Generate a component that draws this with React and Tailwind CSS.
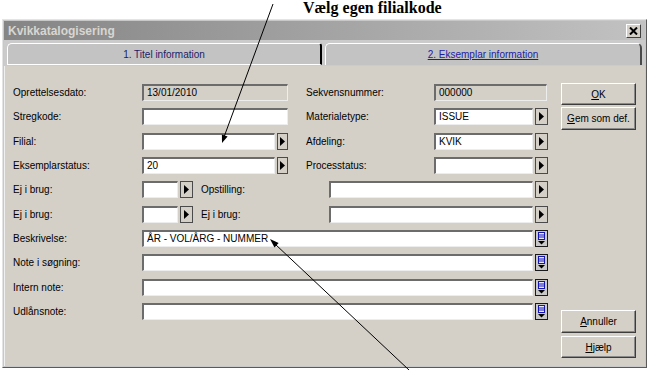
import React from 'react';

const Field = ({ w, value, ro }) => (
    <div
        className={`h-[17px] ${w} shrink-0 border-t-2 border-l-2 border-t-[#6c6c6c] border-l-[#6c6c6c] border-b border-r border-b-[#ededed] border-r-[#ededed] ${ro ? 'bg-[#d4d0c8]' : 'bg-white'} flex items-center pl-[3px] text-[10px] text-black leading-none whitespace-nowrap`}
    >
        {value}
    </div>
);

const ArrowBtn = ({ w = 'w-[13px]' }) => (
    <div className={`h-[17px] ${w} shrink-0 ml-[2px] bg-[#d4d0c8] border border-[#4a4a4a] flex items-center justify-center`}>
        <svg width="5" height="9" viewBox="0 0 5 9">
            <path d="M0 0L5 4.5L0 9Z" fill="#000" />
        </svg>
    </div>
);

const ListBtn = () => (
    <div className="h-[17px] w-[13px] shrink-0 ml-[2px] bg-[#c8c8c8] border border-[#1a1a1a] flex items-center justify-center">
        <svg width="11" height="15" viewBox="0 0 11 15">
            <rect x="2.5" y="1.5" width="6" height="7" fill="#e8e8ff" stroke="#1515b0" />
            <path d="M3 4H8M3 6H8" stroke="#1515b0" />
            <path d="M2 10H9L5.5 13.5Z" fill="#000" />
        </svg>
    </div>
);

const Label = ({ w, children, className = '' }) => (
    <div className={`${w} shrink-0 h-[17px] leading-[17px] text-[10px] text-black whitespace-nowrap ${className}`}>{children}</div>
);

const Btn = ({ h, children }) => (
    <div className={`w-[75px] ${h} bg-[#d4d0c8] border border-t-white border-l-white border-r-[#3c3c3c] border-b-[#3c3c3c] shadow-[inset_-1px_-1px_0_#8a8a8a] flex items-center justify-center text-[10px] text-black`}>
        {children}
    </div>
);

const Row = ({ children }) => <div className="flex items-start h-[24.35px]">{children}</div>;

export default function App() {
    return (
        <div className="relative w-[649px] h-[370px] bg-white overflow-hidden font-['Liberation_Sans',Arial,sans-serif]">
            {/* annotation heading */}
            <div className="h-[19px] pl-[303px] font-['Liberation_Serif','Times_New_Roman',serif] font-bold text-[16px] leading-[16px] text-black">
                Vælg egen filialkode
            </div>

            {/* dialog window */}
            <div className="ml-[2px] w-[645px] h-[349px] border border-t-[#e4e4e4] border-l-[#e4e4e4] border-r-[#5a5a5a] border-b-[#5a5a5a] bg-[#c8c8c8] p-px">
                {/* title bar */}
                <div className="h-[19px] flex items-center justify-between pl-[4px] pr-[4px] bg-gradient-to-r from-[#858585] to-[#c2c2c2]">
                    <span className="text-[12px] font-bold text-[#d8d6d0] leading-none">Kvikkatalogisering</span>
                    <div className="w-[15px] h-[14px] bg-[#d4d0c8] border border-t-white border-l-white border-r-[#404040] border-b-[#404040] flex items-center justify-center">
                        <svg width="9" height="8" viewBox="0 0 9 8">
                            <path d="M1 0.5L8 7.5M8 0.5L1 7.5" stroke="#000" strokeWidth="2" />
                        </svg>
                    </div>
                </div>

                {/* tabs */}
                <div className="h-[26px] pt-[3px] pl-[3px] flex bg-[#cbcbcb]">
                    <div className="w-[315px] h-[22px] bg-[#c3c3c3] border-t border-l border-b border-white border-r-2 border-r-black rounded-tl-[5px] rounded-tr-[3px] flex items-center justify-center text-[10px] text-[#1c1c68]">
                        1. Titel information
                    </div>
                    <div className="ml-[3px] w-[317px] h-[22px] bg-[#c3c3c3] border-t border-l border-white border-r-2 border-r-[#4a4a4a] rounded-t-[5px] flex items-center justify-center text-[10px] text-[#1c1ca8] underline">
                        2. Eksemplar information
                    </div>
                </div>

                {/* body */}
                <div className="h-[300px] flex bg-[#d4d0c8] border-l border-[#f0f0f0]">
                    <div className="w-[556px] pl-[8px] pt-[18px] flex flex-col">
                        <Row>
                            <Label w="w-[129px]">Oprettelsesdato:</Label>
                            <Field w="w-[146px]" value="13/01/2010" ro />
                            <Label w="w-[128px]" className="ml-[18px]">Sekvensnummer:</Label>
                            <Field w="w-[113px]" value="000000" ro />
                        </Row>
                        <Row>
                            <Label w="w-[129px]">Stregkode:</Label>
                            <Field w="w-[146px]" />
                            <Label w="w-[128px]" className="ml-[18px]">Materialetype:</Label>
                            <Field w="w-[99px]" value="ISSUE" />
                            <ArrowBtn />
                        </Row>
                        <Row>
                            <Label w="w-[129px]">Filial:</Label>
                            <Field w="w-[133px]" />
                            <ArrowBtn w="w-[11px]" />
                            <Label w="w-[128px]" className="ml-[18px]">Afdeling:</Label>
                            <Field w="w-[99px]" value="KVIK" />
                            <ArrowBtn />
                        </Row>
                        <Row>
                            <Label w="w-[129px]">Eksemplarstatus:</Label>
                            <Field w="w-[133px]" value="20" />
                            <ArrowBtn w="w-[11px]" />
                            <Label w="w-[128px]" className="ml-[18px]">Processtatus:</Label>
                            <Field w="w-[99px]" />
                            <ArrowBtn />
                        </Row>
                        <Row>
                            <Label w="w-[129px]">Ej i brug:</Label>
                            <Field w="w-[36px]" />
                            <ArrowBtn />
                            <Label w="w-[128px]" className="ml-[8px]">Opstilling:</Label>
                            <Field w="w-[204px]" />
                            <ArrowBtn />
                        </Row>
                        <Row>
                            <Label w="w-[129px]">Ej i brug:</Label>
                            <Field w="w-[36px]" />
                            <ArrowBtn />
                            <Label w="w-[128px]" className="ml-[8px]">Ej i brug:</Label>
                            <Field w="w-[204px]" />
                            <ArrowBtn />
                        </Row>
                        <Row>
                            <Label w="w-[129px]">Beskrivelse:</Label>
                            <Field w="w-[391px]" value="ÅR - VOL/ÅRG - NUMMER" />
                            <ListBtn />
                        </Row>
                        <Row>
                            <Label w="w-[129px]">Note i søgning:</Label>
                            <Field w="w-[391px]" />
                            <ListBtn />
                        </Row>
                        <Row>
                            <Label w="w-[129px]">Intern note:</Label>
                            <Field w="w-[391px]" />
                            <ListBtn />
                        </Row>
                        <Row>
                            <Label w="w-[129px]">Udlånsnote:</Label>
                            <Field w="w-[391px]" />
                            <ListBtn />
                        </Row>
                    </div>

                    {/* buttons */}
                    <div className="w-[75px] pt-[17px] pb-[8px] flex flex-col justify-between">
                        <div className="flex flex-col gap-[2px]">
                            <Btn h="h-[22px]"><span><span className="underline">O</span>K</span></Btn>
                            <Btn h="h-[23px]"><span><span className="underline">G</span>em som def.</span></Btn>
                        </div>
                        <div className="flex flex-col gap-[3px]">
                            <Btn h="h-[23px]"><span><span className="underline">A</span>nnuller</span></Btn>
                            <Btn h="h-[22px]"><span><span className="underline">H</span>jælp</span></Btn>
                        </div>
                    </div>
                </div>
            </div>

            {/* annotation arrows */}
            <svg className="absolute inset-0 pointer-events-none" width="649" height="370" viewBox="0 0 649 370">
                <line x1="273" y1="4" x2="224" y2="137" stroke="#000" strokeWidth="1" />
                <path d="M222 143L227.6 136.5L221.9 134.5Z" fill="#000" />
                <line x1="409" y1="370" x2="275" y2="244" stroke="#000" strokeWidth="1" />
                <path d="M270 239L278.6 243L274.5 247.4Z" fill="#000" />
            </svg>
        </div>
    );
}
